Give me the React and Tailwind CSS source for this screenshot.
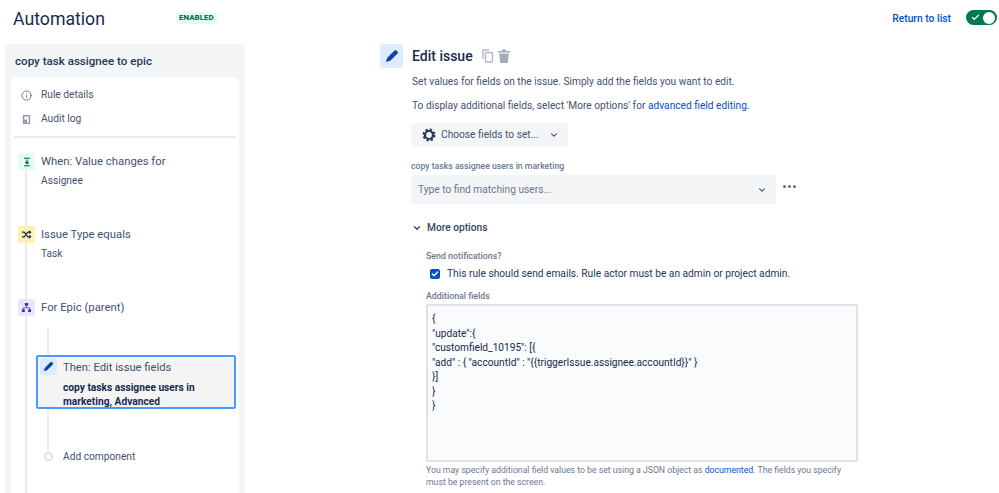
import React from 'react';
import { Check, ChevronDown, Info } from 'lucide-react';

const font = "font-['Roboto',sans-serif]";

function PencilIcon({ className }) {
  return (
    <svg viewBox="0 0 16 16" className={className} fill="currentColor">
      <path d="M11 1.6a1.3 1.3 0 0 1 1.9 0l1.5 1.5a1.3 1.3 0 0 1 0 1.9L6 13.4l-4.4 1.3a.3.3 0 0 1-.4-.4L2.6 10z" />
    </svg>
  );
}

function StepIcon({ bg, children }) {
  return <div className={`w-[17px] h-[17px] rounded-[2px] flex items-center justify-center shrink-0 ${bg}`}>{children}</div>;
}

function Step({ bg, icon, title, sub, className }) {
  return (
    <div className={`relative flex gap-[6px] pl-[7px] ${className}`}>
      <StepIcon bg={bg}>{icon}</StepIcon>
      <div>
        <div className="text-[11.3px] leading-[17px] text-[#42526e]">{title}</div>
        {sub && <div className="text-[10.2px] leading-[14px] mt-[4px] text-[#42526e]">{sub}</div>}
      </div>
    </div>
  );
}

function Sidebar() {
  return (
    <div className="w-[240px] h-[449px] ml-[5px] shrink-0 bg-[#f4f5f7] rounded-t-[5px] px-[6px] overflow-hidden">
      <div className="h-[34px] pl-[4px] pt-[1px] flex items-center text-[11.6px] font-medium text-[#253858]">copy task assignee to epic</div>
      <div className="relative bg-white rounded-t-[5px] h-[415px] pt-[7px]">
        <div className="flex items-center h-[20px] pl-[10px] gap-[9px] text-[10.2px] text-[#42526e]">
          <Info size={11} strokeWidth={1.6} />
          <span>Rule details</span>
        </div>
        <div className="flex items-center h-[20px] mt-[4px] pl-[11px] gap-[10px] text-[10.2px] text-[#42526e]">
          <svg viewBox="0 0 10 12" className="w-[9px] h-[11px]" fill="none">
            <rect x="1" y="1" width="8" height="10" rx="1" fill="#8993a4" />
            <rect x="2.5" y="2.5" width="5" height="7" fill="#fff" />
            <rect x="2.5" y="6" width="3" height="3.5" fill="#8993a4" />
          </svg>
          <span>Audit log</span>
        </div>
        <div className="mx-[3px] mt-[7px] h-[2px] bg-[#ebecf0]" />

        {/* main timeline */}
        <div className="absolute left-[14px] top-[92px] bottom-0 w-[2px] bg-[#ebecf0]" />
        <Step
          className="mt-[15px]"
          bg="bg-[#e3fcef]"
          title="When: Value changes for"
          sub="Assignee"
          icon={
            <svg viewBox="0 0 12 12" className="w-[10px] h-[10px]" fill="none" stroke="#006644" strokeWidth="1.4">
              <path d="M2.5 1.5h7M2.5 10.5h7M6 3v5M4 6l2 2 2-2" />
            </svg>
          }
        />
        <Step
          className="mt-[38px]"
          bg="bg-[#fff0b3]"
          title="Issue Type equals"
          sub="Task"
          icon={
            <svg viewBox="0 0 12 12" className="w-[11px] h-[11px]" fill="none" stroke="#172b4d" strokeWidth="1.3">
              <path d="M1 3.5h2.5l4 5H10M1 8.5h2.5l4-5H10M9 2l1.5 1.5L9 5M9 7l1.5 1.5L9 10" />
            </svg>
          }
        />
        <Step
          className="mt-[38px]"
          bg="bg-[#eae6ff]"
          title="For Epic (parent)"
          icon={
            <svg viewBox="0 0 12 12" className="w-[11px] h-[11px]" fill="#403294">
              <rect x="4.2" y="1" width="3.6" height="3.2" rx=".5" />
              <rect x="1" y="8" width="3.2" height="3" rx=".5" />
              <rect x="7.8" y="8" width="3.2" height="3" rx=".5" />
              <path d="M5.6 4h.8v2H10v2h-.8V6.8H2.8V8H2V6h3.6z" />
            </svg>
          }
        />

        {/* nested timeline */}
        <div className="absolute left-[36px] top-[250px] h-[123px] w-[2px] bg-[#ebecf0]" />
        <div className="relative ml-[25px] w-[200px] h-[54px] mt-[39px] border-2 border-[#4c9aff] rounded-[2px] bg-[#f4f4f4] flex gap-[6px] pl-[2px] pt-[1px]">
          <div className="w-[17px] h-[17px] rounded-[2px] bg-[#deebff] flex items-center justify-center shrink-0">
            <PencilIcon className="w-[11px] h-[11px] text-[#0747a6]" />
          </div>
          <div className="mt-[1px]">
            <div className="text-[11.2px] leading-[17px] text-[#42526e]">Then: Edit issue fields</div>
            <div className="text-[10.2px] leading-[14px] mt-[5px] font-bold text-[#172b4d]">
              copy tasks assignee users in<br />marketing, Advanced
            </div>
          </div>
        </div>
        <div className="relative flex items-center ml-[33px] mt-[40px] gap-[10px] text-[10.2px] text-[#42526e]">
          <div className="w-[9px] h-[9px] rounded-full bg-white border-2 border-[#dfe1e6]" />
          <span>Add component</span>
        </div>
      </div>
    </div>
  );
}

function EditPanel() {
  return (
    <div className="ml-[135px] w-[480px] text-[#42526e]">
      <div className="flex items-center">
        <div className="w-[23px] h-[24px] rounded-[3px] bg-[#deebff] flex items-center justify-center">
          <PencilIcon className="w-[14px] h-[14px] text-[#0747a6]" />
        </div>
        <h2 className="ml-[9px] mt-[1px] text-[14px] font-medium text-[#172b4d]">Edit issue</h2>
        <svg viewBox="0 0 12 14" className="ml-[9px] -mt-[1px] w-[12px] h-[14px]" fill="none" stroke="#b3b9c4" strokeWidth="1.4">
          <path d="M1 10V1h6" />
          <rect x="3.5" y="3.5" width="7" height="9.5" rx="1" />
        </svg>
        <svg viewBox="0 0 12 14" className="ml-[4px] -mt-[1px] w-[12px] h-[14px]" fill="#a5adba">
          <rect x="0" y="2" width="12" height="1.6" rx=".5" />
          <rect x="4" y="0.5" width="4" height="2" />
          <path d="M1.2 4.5h9.6L10 13a1 1 0 0 1-1 1H3a1 1 0 0 1-1-1z" />
        </svg>
      </div>
      <div className="pl-[32px]">
        <p className="mt-[6px] text-[10.2px] leading-[16px]">Set values for fields on the issue. Simply add the fields you want to edit.</p>
        <p className="mt-[8px] text-[10.2px] leading-[16px]">
          To display additional fields, select 'More options' for <span className="text-[#0052cc]">advanced field editing</span>.
        </p>
        <div className="mt-[9px] -ml-[1px] w-[157px] h-[24px] rounded-[3px] bg-[#f4f5f7] flex items-center pl-[11px] gap-[5px] text-[10.2px] text-[#42526e] whitespace-nowrap">
          <svg viewBox="0 0 14 14" className="w-[14px] h-[14px]" fill="none" stroke="#253858">
            <circle cx="7" cy="7" r="4" strokeWidth="2.2" />
            <circle cx="7" cy="7" r="5.6" strokeWidth="1.8" strokeDasharray="2.4 2" />
          </svg>
          <span>Choose fields to set...</span>
          <ChevronDown size={10} strokeWidth={2.5} className="ml-[5px] text-[#253858]" />
        </div>
        <div className="mt-[13px] -ml-[1px] text-[8.7px] leading-[12px] font-medium text-[#6b778c]">copy tasks assignee users in marketing</div>
        <div className="flex items-center -ml-[1px] mt-[3px]">
          <div className="w-[365px] h-[29px] rounded-[3px] bg-[#f4f5f7] flex items-center justify-between pl-[7px] pr-[7px] pt-[1px] text-[10.2px] text-[#6b778c]">
            <span>Type to find matching users...</span>
            <ChevronDown size={10} strokeWidth={2.5} className="mr-[2px] text-[#253858]" />
          </div>
          <div className="ml-[7px] -mt-[7px] flex gap-[2px]">
            <div className="w-[3px] h-[3px] rounded-full bg-[#5e6c84]" />
            <div className="w-[3px] h-[3px] rounded-full bg-[#5e6c84]" />
            <div className="w-[3px] h-[3px] rounded-full bg-[#5e6c84]" />
          </div>
        </div>
        <div className="mt-[16px] flex items-center gap-[5px] text-[10.2px] font-medium text-[#344563]">
          <ChevronDown size={10} strokeWidth={3} />
          <span>More options</span>
        </div>
        <div className="pl-[14px]">
          <div className="mt-[15px] text-[8.8px] leading-[12px] font-medium text-[#6b778c]">Send notifications?</div>
          <div className="mt-[4px] flex items-center gap-[7px] pl-[4px] text-[10.2px] leading-[16px] text-[#253858]">
            <div className="w-[10px] h-[10px] rounded-[2px] bg-[#0052cc] flex items-center justify-center">
              <Check size={8} strokeWidth={4} className="text-white" />
            </div>
            <span>This rule should send emails. Rule actor must be an admin or project admin.</span>
          </div>
          <div className="mt-[8px] text-[8.8px] leading-[12px] font-medium text-[#6b778c]">Additional fields</div>
          <div className="mt-[2px] w-[432px] h-[158px] rounded-[2px] border-2 border-[#dfe1e6] bg-[#fafbfc] px-[4px] pt-[6px] text-[10.15px] leading-[14.5px] text-[#172b4d]">
            <div>{'{'}</div>
            <div>{'"update":{'}</div>
            <div>{'"customfield_10195": [{'}</div>
            <div>{'"add" : { "accountId" : "{{triggerIssue.assignee.accountId}}" }'}</div>
            <div>{'}]'}</div>
            <div>{'}'}</div>
            <div>{'}'}</div>
          </div>
          <p className="mt-[2px] w-[432px] text-[8.7px] leading-[12px] text-[#6b778c]">
            You may specify additional field values to be set using a JSON object as <span className="text-[#0052cc]">documented</span>. The fields you specify must be present on the screen.
          </p>
        </div>
      </div>
    </div>
  );
}

export default function App() {
  return (
    <div className={`${font} w-[999px] h-[493px] overflow-hidden bg-white`}>
      <div className="h-[44px] flex items-start">
        <h1 className="ml-[13px] mt-[6px] w-[163px] text-[17.7px] leading-[26px] text-[#172b4d]">Automation</h1>
        <span className="mt-[12px] h-[12px] px-[3px] rounded-[2px] bg-[#e3fcef] text-[8px] leading-[12px] font-bold text-[#006644]">ENABLED</span>
        <a className="ml-auto mt-[12px] text-[10.3px] leading-[14px] font-medium text-[#0052cc]">Return to list</a>
        <div className="ml-[15px] mr-[2px] mt-[10px] w-[31px] h-[15px] rounded-full bg-[#007a4d] flex items-center justify-between pl-[5px] pr-[2px]">
          <Check size={9} strokeWidth={3.5} className="text-white" />
          <div className="w-[12px] h-[12px] rounded-full bg-white" />
        </div>
      </div>
      <div className="flex">
        <Sidebar />
        <EditPanel />
      </div>
    </div>
  );
}
